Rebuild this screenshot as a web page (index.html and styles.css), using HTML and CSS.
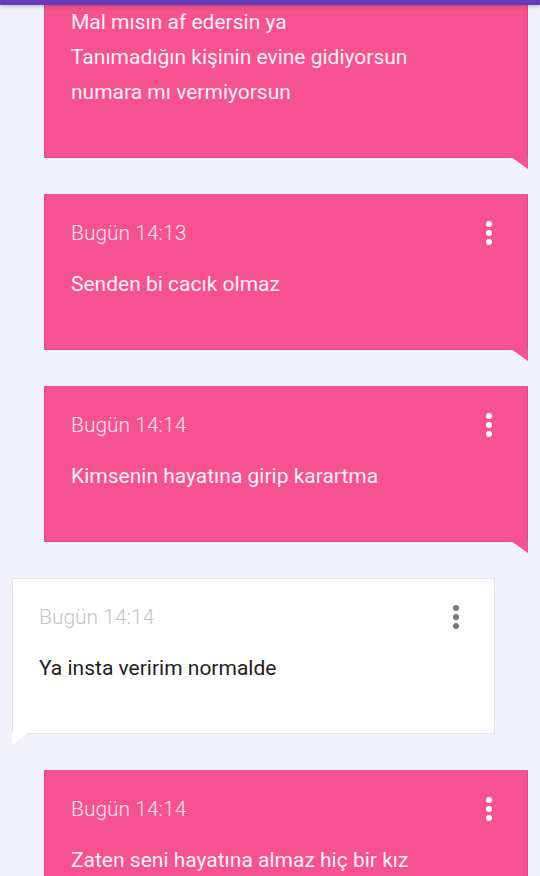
FILE: index.html
```html
<!DOCTYPE html>
<html lang="tr">
<head>
    <meta charset="UTF-8">
    <meta name="viewport" content="width=device-width, initial-scale=1.0">
    <title>Sohbet</title>
    <link rel="stylesheet" href="styles.css">
</head>
<body>
    <div class="topbar"></div>
    <div class="chat">
        <div class="bubble out first">
            <p class="msg">Mal mısın af edersin ya</p>
            <p class="msg">Tanımadığın kişinin evine gidiyorsun</p>
            <p class="msg">numara mı vermiyorsun</p>
        </div>
        <div class="bubble out">
            <div class="head">
                <span class="time">Bugün 14:13</span>
                <span class="dots"><i></i><i></i><i></i></span>
            </div>
            <p class="msg">Senden bi cacık olmaz</p>
        </div>
        <div class="bubble out">
            <div class="head">
                <span class="time">Bugün 14:14</span>
                <span class="dots"><i></i><i></i><i></i></span>
            </div>
            <p class="msg">Kimsenin hayatına girip karartma</p>
        </div>
        <div class="bubble in">
            <div class="head">
                <span class="time">Bugün 14:14</span>
                <span class="dots"><i></i><i></i><i></i></span>
            </div>
            <p class="msg">Ya insta veririm normalde</p>
        </div>
        <div class="bubble out">
            <div class="head">
                <span class="time">Bugün 14:14</span>
                <span class="dots"><i></i><i></i><i></i></span>
            </div>
            <p class="msg">Zaten seni hayatına almaz hiç bir kız</p>
        </div>
    </div>
</body>
</html>
```

FILE: styles.css
```css
* { margin: 0; padding: 0; box-sizing: border-box; }
body {
    font-family: Roboto, 'Liberation Sans', sans-serif;
    background: #f1f1f9;
    height: 876px;
    overflow: hidden;
}
.topbar {
    height: 5px;
    background: #673ab7;
    box-shadow: 0 1px 4px rgba(0, 0, 0, 0.25);
    position: relative;
    z-index: 2;
}
.chat {
    display: flex;
    flex-direction: column;
    gap: 36px;
}
.bubble {
    position: relative;
    padding: 24px 26px 47px 26px;
}
.bubble.out {
    margin-left: 44px;
    margin-right: 12px;
    background: #f65290;
    border: 1px solid #d94a81;
    border-top-color: #f65290;
    color: #fdeef4;
}
.bubble.in {
    margin-left: 12px;
    margin-right: 45px;
    background: #ffffff;
    border: 1px solid #e2e2ea;
    color: #222222;
}
.bubble.first {
    padding-top: 0;
    padding-bottom: 47px;
    border-top: none;
}
.bubble.out::after {
    content: '';
    position: absolute;
    right: -1px;
    bottom: -12px;
    width: 17px;
    height: 12px;
    background: #f65290;
    clip-path: polygon(0 0, 100% 0, 100% 100%);
}
.bubble.in::after {
    content: '';
    position: absolute;
    left: -1px;
    bottom: -12px;
    width: 16px;
    height: 12px;
    background: #ffffff;
    clip-path: polygon(0 0, 100% 0, 0 100%);
}
.head {
    display: flex;
    justify-content: space-between;
    align-items: center;
    height: 28px;
    margin-bottom: 20px;
}
.time {
    font-size: 21px;
    font-weight: 300;
}
.bubble.out .time { color: #fde3ee; }
.bubble.in .time { color: #c4c4c4; }
.dots {
    display: flex;
    flex-direction: column;
    gap: 3px;
    margin-right: 9px;
}
.dots i {
    display: block;
    width: 6px;
    height: 6px;
    border-radius: 50%;
}
.bubble.out .dots i { background: #ffffff; }
.bubble.in .dots i { background: #7a7a7a; }
.msg {
    font-size: 21px;
    line-height: 35px;
}
```
